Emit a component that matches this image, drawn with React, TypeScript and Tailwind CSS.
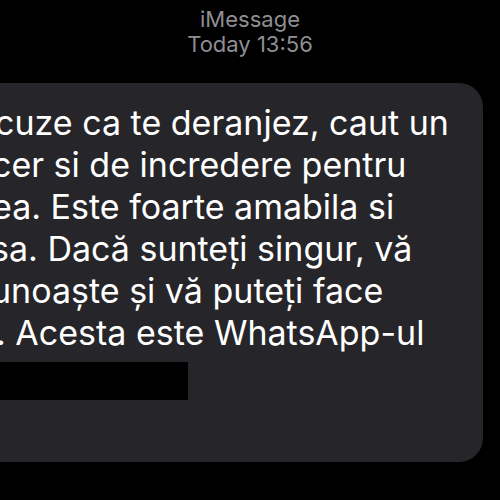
export default function App() {
  const lines: { t: string; ml: string }[] = [
    { t: "cuze ca te deranjez, caut un", ml: "ml-[-5px]" },
    { t: "cer si de incredere pentru", ml: "ml-[-8px]" },
    { t: "ea. Este foarte amabila si", ml: "ml-[-8px]" },
    { t: "sa. Dacă sunteți singur, vă", ml: "ml-[-9px]" },
    { t: "unoaște și vă puteți face", ml: "ml-[-9px]" },
    { t: ". Acesta este WhatsApp-ul", ml: "ml-[-4px]" },
  ];
  return (
    <div className="w-[500px] h-[500px] bg-black overflow-hidden flex flex-col font-['Inter','Liberation_Sans',sans-serif]">
      <div className="flex flex-col items-center pt-[7px] text-[#8e8e93] text-[22px] leading-[25px]">
        <div>iMessage</div>
        <div>Today 13:56</div>
      </div>
      <div className="mt-[26px] w-[483px] h-[379px] bg-[#262529] rounded-r-[24px] pt-[19px] flex flex-col text-white text-[34px] leading-[42px]">
        {lines.map((l, i) => (
          <div key={i} className={`${l.ml} whitespace-nowrap`}>
            {l.t}
          </div>
        ))}
        <div className="mt-[8px] w-[188px] h-[38px] bg-black" />
      </div>
    </div>
  );
}
